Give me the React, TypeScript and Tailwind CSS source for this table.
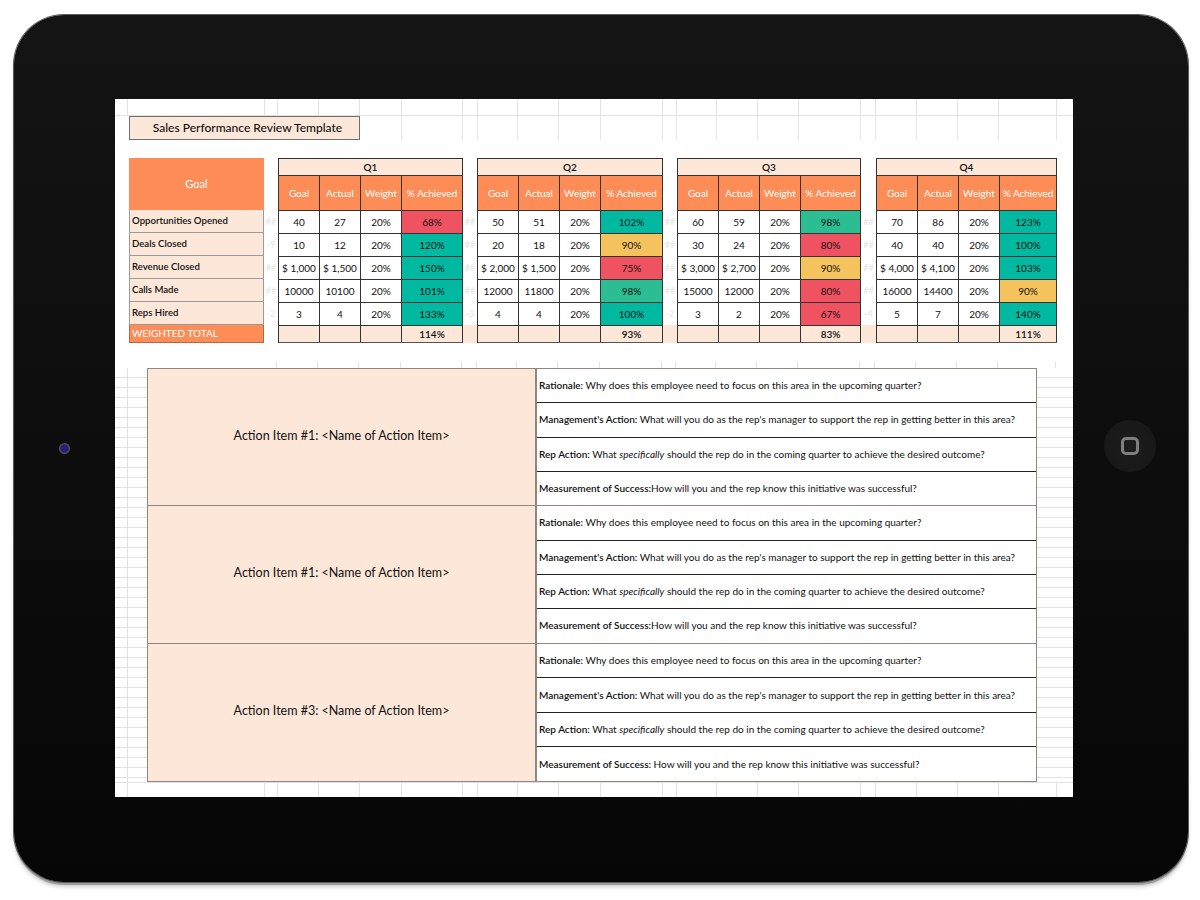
import React from "react";

const PEACH = "bg-[#fce7d8]";

type Tone = "red" | "teal" | "green" | "yellow";

const toneClass: Record<Tone, string> = {
  red: "bg-[#ef5261]",
  teal: "bg-[#00b9a0]",
  green: "bg-[#2cbd92]",
  yellow: "bg-[#f4c35d]",
};

const labels = ["Opportunities Opened", "Deals Closed", "Revenue Closed", "Calls Made", "Reps Hired"];

const quarters: {
  name: string;
  width: string;
  total: string;
  rows: [string, string, string, Tone][];
}[] = [
  {
    name: "Q1",
    width: "w-[185px]",
    total: "114%",
    rows: [
      ["40", "27", "68%", "red"],
      ["10", "12", "120%", "teal"],
      ["$ 1,000", "$ 1,500", "150%", "teal"],
      ["10000", "10100", "101%", "teal"],
      ["3", "4", "133%", "teal"],
    ],
  },
  {
    name: "Q2",
    width: "w-[186px]",
    total: "93%",
    rows: [
      ["50", "51", "102%", "teal"],
      ["20", "18", "90%", "yellow"],
      ["$ 2,000", "$ 1,500", "75%", "red"],
      ["12000", "11800", "98%", "green"],
      ["4", "4", "100%", "teal"],
    ],
  },
  {
    name: "Q3",
    width: "w-[184px]",
    total: "83%",
    rows: [
      ["60", "59", "98%", "green"],
      ["30", "24", "80%", "red"],
      ["$ 3,000", "$ 2,700", "90%", "yellow"],
      ["15000", "12000", "80%", "red"],
      ["3", "2", "67%", "red"],
    ],
  },
  {
    name: "Q4",
    width: "w-[181px]",
    total: "111%",
    rows: [
      ["70", "86", "123%", "teal"],
      ["40", "40", "100%", "teal"],
      ["$ 4,000", "$ 4,100", "103%", "teal"],
      ["16000", "14400", "90%", "yellow"],
      ["5", "7", "140%", "teal"],
    ],
  },
];

// hidden overflow values that bleed into the narrow spacer columns
const gaps: { width: string; marks: string[]; peach: boolean }[] = [
  { width: "w-[14px]", marks: ["##", "-9", "##", "##", "-2"], peach: false },
  { width: "w-[14px]", marks: ["##", "##", "##", "##", "-3"], peach: true },
  { width: "w-[14px]", marks: ["##", "##", "##", "##", "-2"], peach: true },
  { width: "w-[15px]", marks: ["##", "##", "##", "##", "-4"], peach: true },
];

// spreadsheet column widths across the screen, used for the faint grid strips
const sheetCols = [
  "w-[13px]", "w-[137px]", "w-[13px]", "w-[41px]", "w-[41px]", "w-[42px]", "w-[61px]", "w-[15px]",
  "w-[40px]", "w-[41px]", "w-[42px]", "w-[62px]", "w-[14px]", "w-[40px]", "w-[41px]", "w-[41px]",
  "w-[62px]", "w-[15px]", "w-[41px]", "w-[41px]", "w-[41px]", "w-[58px]",
];

const actionItems = [
  { title: "Action Item #1: <Name of Action Item>", spaced: false },
  { title: "Action Item #1: <Name of Action Item>", spaced: false },
  { title: "Action Item #3: <Name of Action Item>", spaced: true },
];

function GridStrip({ height, from = 0, border = "" }: { height: string; from?: number; border?: string }) {
  return (
    <div className={`flex shrink-0 ${height} ${border}`}>
      {sheetCols.slice(from).map((w, i) => (
        <div key={i} className={`${w} shrink-0 border-r border-[#e2e2e2]`} />
      ))}
      <div className="flex-1" />
    </div>
  );
}

function GoalColumn() {
  return (
    <div className="w-[135px] shrink-0 flex flex-col">
      <div className="h-[52px] bg-[#fd8c56] flex items-center justify-center text-white text-[11px]">
        Goal
      </div>
      {labels.map((l) => (
        <div
          key={l}
          className={`h-[23px] ${PEACH} border-b border-x border-[#9a9a9a] flex items-center px-[2px] text-[9.6px] font-semibold text-[#111]`}
        >
          {l}
        </div>
      ))}
      <div className="h-[18px] bg-[#fd8c56] border border-t-0 border-[#b06a45] flex items-center px-[2px] text-[10px] text-white">
        WEIGHTED TOTAL
      </div>
    </div>
  );
}

function Gap({ gap }: { gap: (typeof gaps)[number] }) {
  return (
    <div className={`${gap.width} shrink-0 flex flex-col`}>
      <div className="h-[52px]" />
      {gap.marks.map((m, i) => (
        <div key={i} className="h-[23px] flex items-center justify-center text-[9px] text-[#e4e4e4]">
          {m}
        </div>
      ))}
      <div className={`h-[18px] ${gap.peach ? PEACH : ""}`} />
    </div>
  );
}

function Quarter({ q }: { q: (typeof quarters)[number] }) {
  const row = "grid grid-cols-[41px_41px_41px_1fr]";
  return (
    <div className={`${q.width} shrink-0 flex flex-col border-l border-t border-[#333] text-[10px] text-[#111]`}>
      <div className={`h-[17px] ${PEACH} border-r border-b border-[#333] flex items-center justify-center font-semibold`}>
        {q.name}
      </div>
      <div className={`${row} h-[35px] bg-[#fd8c56] border-b border-[#333] text-white`}>
        {["Goal", "Actual", "Weight", "% Achieved"].map((h) => (
          <div key={h} className="border-r border-[#333] flex items-center justify-center whitespace-nowrap">
            {h}
          </div>
        ))}
      </div>
      {q.rows.map((r, i) => (
        <div key={i} className={`${row} h-[23px] border-b border-[#333] bg-white`}>
          <div className="border-r border-[#333] flex items-center justify-center whitespace-nowrap">{r[0]}</div>
          <div className="border-r border-[#333] flex items-center justify-center whitespace-nowrap">{r[1]}</div>
          <div className="border-r border-[#333] flex items-center justify-center">20%</div>
          <div className={`border-r border-[#333] flex items-center justify-center ${toneClass[r[3]]}`}>{r[2]}</div>
        </div>
      ))}
      <div className={`${row} h-[17px] ${PEACH} border-b border-[#555]`}>
        <div className="border-r border-[#333]" />
        <div className="border-r border-[#333]" />
        <div className="border-r border-[#333]" />
        <div className="border-r border-[#333] flex items-center justify-center font-semibold">{q.total}</div>
      </div>
    </div>
  );
}

function ActionGroup({ title, spaced, last }: { title: string; spaced: boolean; last: boolean }) {
  const rows: [string, React.ReactNode][] = [
    ["Rationale:", " Why does this employee need to focus on this area in the upcoming quarter?"],
    ["Management's Action:", " What will you do as the rep's manager to support the rep in getting better in this area?"],
    [
      "Rep Action:",
      <>
        {" What "}
        <i>specifically</i>
        {" should the rep do in the coming quarter to achieve the desired outcome?"}
      </>,
    ],
    [
      "Measurement of Success:",
      (spaced ? " " : "") + "How will you and the rep know this initiative was successful?",
    ],
  ];
  return (
    <div className={`flex h-[138px] ${last ? "" : "border-b border-[#8f8782]"}`}>
      <div className={`w-[389px] shrink-0 ${PEACH} border-r-2 border-[#8f8782] flex items-center justify-center text-[12.5px] text-[#111] pb-[2px]`}>
        {title}
      </div>
      <div className="flex-1 flex flex-col bg-white">
        {rows.map(([b, t], i) => (
          <div
            key={i}
            className={`flex-1 flex items-center pl-[2px] text-[10px] text-[#111] whitespace-nowrap ${
              i < 3 ? "border-b border-[#222]" : ""
            }`}
          >
            <span>
              <span className="font-semibold">{b}</span>
              {t}
            </span>
          </div>
        ))}
      </div>
    </div>
  );
}

function Screen() {
  const lined =
    "bg-[repeating-linear-gradient(to_bottom,transparent_0,transparent_9px,#e2e2e2_9px,#e2e2e2_10px)]";
  return (
    <div className="w-[958px] h-[698px] shrink-0 bg-white flex flex-col overflow-hidden font-['Lato','Noto_Sans',sans-serif]">
      <GridStrip height="h-[17px]" border="border-b border-[#e2e2e2]" />

      {/* title row */}
      <div className="flex h-[24px] shrink-0">
        <div className="w-[14px] shrink-0" />
        <div className={`w-[231px] shrink-0 ${PEACH} border border-[#6f6f6f] flex items-center justify-center text-[12px] font-medium text-[#111] pl-[6px]`}>
          Sales Performance Review Template
        </div>
        {sheetCols.slice(5).map((w, i) => (
          <div key={i} className={`${w} shrink-0 border-r border-[#e6e6e6]`} />
        ))}
      </div>

      <div className="h-[18px] shrink-0" />

      {/* quarter tables */}
      <div className="flex shrink-0">
        <div className="w-[14px] shrink-0" />
        <GoalColumn />
        {quarters.map((q, i) => (
          <React.Fragment key={q.name}>
            <Gap gap={gaps[i]} />
            <Quarter q={q} />
          </React.Fragment>
        ))}
      </div>

      <div className="h-[19px] shrink-0" />
      <div className="flex h-[6px] shrink-0">
        <div className="w-[149px] shrink-0" />
        {sheetCols.slice(2).map((w, i) => (
          <div key={i} className={`${w} shrink-0 border-r border-[#e2e2e2]`} />
        ))}
      </div>

      {/* action items */}
      <div className="flex h-[414px] shrink-0">
        <div className={`w-[32px] shrink-0 flex ${lined}`}>
          <div className="w-[13px] border-r border-[#e2e2e2]" />
        </div>
        <div className="w-[890px] shrink-0 flex flex-col border border-[#8f8782]">
          {actionItems.map((a, i) => (
            <ActionGroup key={i} title={a.title} spaced={a.spaced} last={i === actionItems.length - 1} />
          ))}
        </div>
        <div className={`flex-1 ${lined}`} />
      </div>

      <GridStrip height="flex-1" border="border-t border-[#e2e2e2]" />
    </div>
  );
}

function HomeButton() {
  return (
    <div className="w-[52px] h-[52px] rounded-full bg-[radial-gradient(circle,#1d1d1d_0%,#181818_75%,#222_100%)] flex items-center justify-center">
      <div className="w-[18px] h-[18px] rounded-[5px] border-[3px] border-[#7e7e7e]" />
    </div>
  );
}

function Camera() {
  return (
    <div className="w-[11px] h-[11px] rounded-full bg-[radial-gradient(circle,#2b1fb0_0%,#231a66_35%,#5a5a5a_75%,#1a1a1a_100%)]" />
  );
}

export default function App() {
  return (
    <div className="w-[1200px] h-[900px] bg-white pt-[15px] pl-[14px] overflow-hidden">
      <div className="w-[1174px] h-[867px] rounded-[50px] bg-[linear-gradient(180deg,#141414,#060606)] shadow-[0_0_0_1px_#5c5c5c,0_3px_1px_#9b9b9b,0_5px_4px_#cfcfcf] flex flex-col overflow-hidden">
        <div className="h-[84px] shrink-0" />
        <div className="flex h-[698px] shrink-0">
          <div className="w-[101px] shrink-0 flex items-center justify-center">
            <Camera />
          </div>
          <Screen />
          <div className="flex-1 flex items-center justify-center pr-[1px] pb-[5px]">
            <HomeButton />
          </div>
        </div>
        <div className="flex-1" />
      </div>
    </div>
  );
}
